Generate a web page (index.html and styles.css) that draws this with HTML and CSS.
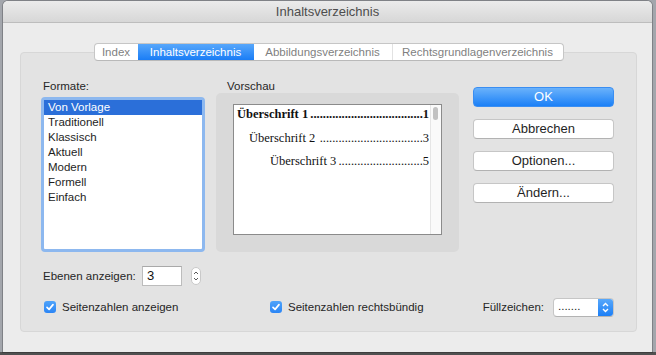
FILE: index.html
```html
<!DOCTYPE html>
<html lang="de">
<head>
<meta charset="utf-8">
<title>Inhaltsverzeichnis</title>
<link rel="stylesheet" href="styles.css">
</head>
<body>
<div class="window">
  <div class="titlebar">Inhaltsverzeichnis</div>
  <div class="tabview">
    <div class="tabs">
      <div class="tab t-index">Index</div>
      <div class="tab t-inh active">Inhaltsverzeichnis</div>
      <div class="tab t-abb">Abbildungsverzeichnis</div>
      <div class="tab t-rech">Rechtsgrundlagenverzeichnis</div>
    </div>
    <div class="pane">
      <div class="main">
        <div class="col-formats">
          <div class="label">Formate:</div>
          <ul class="listbox">
            <li class="sel">Von Vorlage</li>
            <li>Traditionell</li>
            <li>Klassisch</li>
            <li>Aktuell</li>
            <li>Modern</li>
            <li>Formell</li>
            <li>Einfach</li>
          </ul>
        </div>
        <div class="col-preview">
          <div class="label">Vorschau</div>
          <div class="preview-box">
            <div class="page">
              <div class="entries">
                <div class="entry e1"><span class="txt">Überschrift 1</span><span class="leader">....................................</span><span class="num">1</span></div>
                <div class="entry e2"><span class="txt">Überschrift 2</span><span class="leader">.................................</span><span class="num">3</span></div>
                <div class="entry e3"><span class="txt">Überschrift 3</span><span class="leader">...........................</span><span class="num">5</span></div>
              </div>
              <div class="scrollbar"><div class="thumb"></div></div>
            </div>
          </div>
        </div>
        <div class="col-buttons">
          <div class="btn btn-default">OK</div>
          <div class="btn">Abbrechen</div>
          <div class="btn">Optionen...</div>
          <div class="btn">Ändern...</div>
        </div>
      </div>
      <div class="levels-row">
        <span class="levels-label">Ebenen anzeigen:</span>
        <div class="num-input">3</div>
        <div class="stepper">
          <svg width="8" height="16" viewBox="0 0 8 16"><path d="M2 6 L4 4 L6 6" fill="none" stroke="#5a5a5a" stroke-width="1"/><path d="M2 10 L4 12 L6 10" fill="none" stroke="#5a5a5a" stroke-width="1"/></svg>
        </div>
      </div>
      <div class="check-row">
        <label class="check-item first">
          <span class="box"><svg width="12" height="12" viewBox="0 0 12 12"><path d="M3 6.3 L5.1 8.4 L9 3.6" fill="none" stroke="#fff" stroke-width="1.7" stroke-linecap="round" stroke-linejoin="round"/></svg></span>
          <span>Seitenzahlen anzeigen</span>
        </label>
        <label class="check-item">
          <span class="box"><svg width="12" height="12" viewBox="0 0 12 12"><path d="M3 6.3 L5.1 8.4 L9 3.6" fill="none" stroke="#fff" stroke-width="1.7" stroke-linecap="round" stroke-linejoin="round"/></svg></span>
          <span>Seitenzahlen rechtsbündig</span>
        </label>
        <div class="fill">
          <span class="fill-label">Füllzeichen:</span>
          <div class="popup">
            <span class="popup-value">.......</span>
            <span class="popup-arrows"><svg width="15" height="17" viewBox="0 0 15 17"><path d="M5 7 L7.5 4.5 L10 7" fill="none" stroke="#fff" stroke-width="1.4"/><path d="M5 10 L7.5 12.5 L10 10" fill="none" stroke="#fff" stroke-width="1.4"/></svg></span>
          </div>
        </div>
      </div>
    </div>
  </div>
</div>
</body>
</html>
```
FILE: styles.css
```css
* { box-sizing: border-box; }
html, body { margin: 0; padding: 0; }
body {
  width: 656px;
  height: 355px;
  overflow: hidden;
  background: linear-gradient(to bottom, #a3a6ac 0, #a3a6ac 352px, #505050 352px);
  font-family: "Liberation Sans", Arial, sans-serif;
  color: #222;
  padding: 1px 4px 0 3px;
}
.window {
  width: 649px;
  height: 351px;
  background: #ececec;
  border-radius: 5px 5px 0 0;
  box-shadow: 0 0 0 1px rgba(0,0,0,0.22);
  display: flex;
  flex-direction: column;
}
.titlebar {
  height: 22px;
  border-bottom: 1px solid #bdbdbd;
  background: linear-gradient(#ebebeb, #d7d7d7);
  border-radius: 5px 5px 0 0;
  text-align: center;
  font-size: 13px;
  line-height: 22px;
  color: #4d4d4d;
}
.tabview { margin: 20px 15px 0 17px; }
.tabs {
  position: relative;
  z-index: 1;
  display: flex;
  width: 470px;
  height: 18px;
  margin: 0 auto;
  background: #fff;
  border: 1px solid #c6c6c6;
  border-bottom-color: #b9b9b9;
  border-radius: 4px;
  overflow: hidden;
}
.tab {
  height: 16px;
  font-size: 11.5px;
  line-height: 16px;
  color: #7f7f7f;
  text-align: center;
  white-space: nowrap;
}
.t-index { width: 43px; }
.t-inh { width: 116px; }
.t-abb { width: 138px; }
.t-rech { width: 171px; border-left: 1px solid #e2e2e2; }
.tab.active {
  background: linear-gradient(#57a7fb, #1a7df6);
  color: #fff;
}
.pane {
  margin-top: -9px;
  height: 280px;
  background: #e3e3e3;
  border: 1px solid #d7d7d7;
  border-radius: 4px;
  padding: 26px 22px 0 20px;
}
.main { display: flex; }
.col-formats { width: 164px; }
.col-preview { width: 243px; margin-left: 11px; }
.col-buttons { width: 141px; margin-left: 14px; padding-top: 8px; }
.label {
  font-size: 11.5px;
  line-height: 14px;
  height: 14px;
  color: #262626;
}
.col-formats .label { padding-left: 2px; }
.col-preview .label { padding-left: 11px; }
.listbox {
  margin: 4px 0 0;
  padding: 0;
  list-style: none;
  height: 155px;
  background: #fff;
  border: 3px solid #8db8ef;
  border-radius: 4px;
}
.listbox li {
  height: 15px;
  line-height: 15px;
  font-size: 11.5px;
  padding-left: 4px;
  color: #1e1e1e;
}
.listbox li.sel { background: #2b6fd9; color: #fff; }
.preview-box {
  height: 159px;
  background: #d9d9d9;
  border-radius: 5px;
  padding: 11px 17px;
}
.page {
  width: 209px;
  height: 131px;
  background: #fff;
  border: 1px solid #8b8b8b;
  display: flex;
}
.entries {
  flex: 1;
  min-width: 0;
  padding: 0 1px 0 3px;
  font-family: "Liberation Serif", "Times New Roman", serif;
  font-size: 12.5px;
  color: #111;
}
.entry {
  display: flex;
  height: 18px;
  line-height: 18px;
  white-space: nowrap;
}
.e1 { font-weight: bold; margin-bottom: 6px; }
.e2 { padding-left: 12px; margin-bottom: 5px; }
.e3 { padding-left: 33px; }
.leader { flex: 1; text-align: right; }
.scrollbar {
  width: 11px;
  border-left: 1px solid #e6e6e6;
  background: #fafafa;
}
.thumb {
  margin: 2px 0 0 2px;
  width: 5px;
  height: 13px;
  border-radius: 3px;
  background: #c2c2c2;
}
.btn {
  height: 20px;
  margin-bottom: 12px;
  background: #fff;
  border: 1px solid #c6c6c6;
  border-bottom-color: #b2b2b2;
  border-radius: 4px;
  font-size: 13px;
  line-height: 18px;
  text-align: center;
  color: #1f1f1f;
}
.btn-default {
  background: linear-gradient(#6ab2fb, #1b80f7);
  border-color: #3a8ef2;
  color: #fff;
}
.levels-row {
  margin-top: 14px;
  display: flex;
  align-items: center;
  height: 20px;
}
.levels-label {
  width: 101px;
  padding-left: 2px;
  font-size: 11.5px;
  color: #262626;
}
.num-input {
  width: 40px;
  height: 20px;
  background: #fff;
  border: 1px solid #bcbcbc;
  border-top-color: #a9a9a9;
  font-size: 13px;
  line-height: 18px;
  padding-left: 4px;
  color: #111;
}
.stepper {
  margin-left: 9px;
  width: 10px;
  height: 18px;
  border: 1px solid #c9c9c9;
  border-radius: 5px;
  background: #fff;
  display: flex;
  align-items: center;
  justify-content: center;
}
.check-row {
  margin-top: 11px;
  display: flex;
  align-items: center;
  height: 20px;
}
.check-item {
  display: flex;
  align-items: center;
  font-size: 11.5px;
  color: #262626;
}
.check-item.first { width: 229px; padding-left: 3px; }
.box {
  width: 12px;
  height: 12px;
  border-radius: 3px;
  background: linear-gradient(#4fa3fa, #2b85f5);
  margin-right: 6px;
  display: flex;
}
.fill { margin-left: auto; display: flex; align-items: center; }
.fill-label { margin-right: 9px; font-size: 11.5px; color: #262626; }
.popup {
  width: 61px;
  height: 19px;
  display: flex;
  border: 1px solid #c6c6c6;
  border-bottom-color: #b3b3b3;
  border-radius: 4px;
  background: #fff;
  overflow: hidden;
}
.popup-value {
  flex: 1;
  padding-left: 4px;
  font-size: 11.5px;
  line-height: 15px;
  color: #222;
}
.popup-arrows {
  width: 15px;
  background: linear-gradient(#58a8fb, #1c7ff6);
  display: flex;
}
```
